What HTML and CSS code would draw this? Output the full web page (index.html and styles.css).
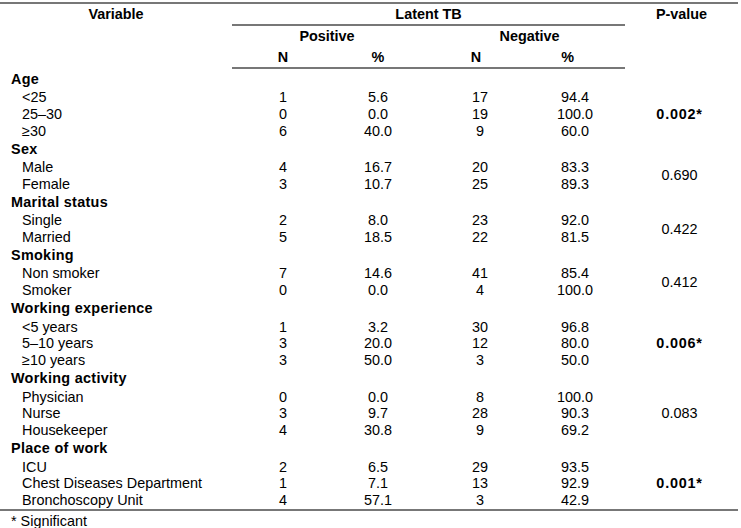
FILE: index.html
```html
<!DOCTYPE html>
<html>
<head>
<meta charset="utf-8">
<link rel="stylesheet" href="styles.css">
</head>
<body>
<table class="tb">
  <colgroup>
    <col class="c-var"><col class="c-n1"><col class="c-p1"><col class="c-n2"><col class="c-p2"><col class="c-pv">
  </colgroup>
  <thead>
    <tr class="h1">
      <th rowspan="3" class="th-var">Variable</th>
      <th colspan="4" class="th-lat">Latent TB</th>
      <th rowspan="3" class="th-pv">P-value</th>
    </tr>
    <tr class="h2">
      <th colspan="2" class="th-pos">Positive</th>
      <th colspan="2" class="th-neg">Negative</th>
    </tr>
    <tr class="h3">
      <th class="th-sub">N</th>
      <th class="th-sub">%</th>
      <th class="th-sub th-n2">N</th>
      <th class="th-sub th-p2">%</th>
    </tr>
  </thead>
  <tbody>
    <tr class="grp"><td class="g">Age</td><td colspan="5"></td></tr>
    <tr class="row"><td class="v">&lt;25</td><td class="n1">1</td><td class="p1">5.6</td><td class="n2">17</td><td class="p2">94.4</td><td rowspan="3" class="pv sig">0.002*</td></tr>
    <tr class="row"><td class="v">25–30</td><td class="n1">0</td><td class="p1">0.0</td><td class="n2">19</td><td class="p2">100.0</td></tr>
    <tr class="row"><td class="v">≥30</td><td class="n1">6</td><td class="p1">40.0</td><td class="n2">9</td><td class="p2">60.0</td></tr>

    <tr class="grp"><td class="g">Sex</td><td colspan="5"></td></tr>
    <tr class="row"><td class="v">Male</td><td class="n1">4</td><td class="p1">16.7</td><td class="n2">20</td><td class="p2">83.3</td><td rowspan="2" class="pv">0.690</td></tr>
    <tr class="row"><td class="v">Female</td><td class="n1">3</td><td class="p1">10.7</td><td class="n2">25</td><td class="p2">89.3</td></tr>

    <tr class="grp"><td class="g">Marital status</td><td colspan="5"></td></tr>
    <tr class="row"><td class="v">Single</td><td class="n1">2</td><td class="p1">8.0</td><td class="n2">23</td><td class="p2">92.0</td><td rowspan="2" class="pv">0.422</td></tr>
    <tr class="row"><td class="v">Married</td><td class="n1">5</td><td class="p1">18.5</td><td class="n2">22</td><td class="p2">81.5</td></tr>

    <tr class="grp"><td class="g">Smoking</td><td colspan="5"></td></tr>
    <tr class="row"><td class="v">Non smoker</td><td class="n1">7</td><td class="p1">14.6</td><td class="n2">41</td><td class="p2">85.4</td><td rowspan="2" class="pv">0.412</td></tr>
    <tr class="row"><td class="v">Smoker</td><td class="n1">0</td><td class="p1">0.0</td><td class="n2">4</td><td class="p2">100.0</td></tr>

    <tr class="grp"><td class="g">Working experience</td><td colspan="5"></td></tr>
    <tr class="row"><td class="v">&lt;5 years</td><td class="n1">1</td><td class="p1">3.2</td><td class="n2">30</td><td class="p2">96.8</td><td rowspan="3" class="pv sig">0.006*</td></tr>
    <tr class="row"><td class="v">5–10 years</td><td class="n1">3</td><td class="p1">20.0</td><td class="n2">12</td><td class="p2">80.0</td></tr>
    <tr class="row"><td class="v">≥10 years</td><td class="n1">3</td><td class="p1">50.0</td><td class="n2">3</td><td class="p2">50.0</td></tr>

    <tr class="grp"><td class="g">Working activity</td><td colspan="5"></td></tr>
    <tr class="row"><td class="v">Physician</td><td class="n1">0</td><td class="p1">0.0</td><td class="n2">8</td><td class="p2">100.0</td><td rowspan="3" class="pv">0.083</td></tr>
    <tr class="row"><td class="v">Nurse</td><td class="n1">3</td><td class="p1">9.7</td><td class="n2">28</td><td class="p2">90.3</td></tr>
    <tr class="row"><td class="v">Housekeeper</td><td class="n1">4</td><td class="p1">30.8</td><td class="n2">9</td><td class="p2">69.2</td></tr>

    <tr class="grp"><td class="g">Place of work</td><td colspan="5"></td></tr>
    <tr class="row"><td class="v">ICU</td><td class="n1">2</td><td class="p1">6.5</td><td class="n2">29</td><td class="p2">93.5</td><td rowspan="3" class="pv sig">0.001*</td></tr>
    <tr class="row"><td class="v">Chest Diseases Department</td><td class="n1">1</td><td class="p1">7.1</td><td class="n2">13</td><td class="p2">92.9</td></tr>
    <tr class="row last"><td class="v">Bronchoscopy Unit</td><td class="n1">4</td><td class="p1">57.1</td><td class="n2">3</td><td class="p2">42.9</td></tr>
  </tbody>
</table>
<p class="note">* Significant</p>
</body>
</html>
```

FILE: styles.css
```css
html, body {
  margin: 0;
  padding: 0;
  background: #ffffff;
}
body {
  padding-top: 2px;
  font-family: "Liberation Sans", Arial, sans-serif;
  font-size: 14.4px;
  color: #000;
}
.tb {
  width: 738px;
  border-collapse: separate;
  border-spacing: 0;
  table-layout: fixed;
  border-top: 2px solid #777;
  border-bottom: 2px solid #777;
}
.c-var { width: 232px; }
.c-n1 { width: 102px; }
.c-p1 { width: 88px; }
.c-n2 { width: 108px; }
.c-p2 { width: 95px; }
.c-pv { width: 113px; }

th, td {
  padding: 0;
  font-weight: normal;
}
th {
  font-weight: bold;
  text-align: center;
  white-space: nowrap;
}
.h1 th { height: 20px; line-height: 20px; vertical-align: top; }
.th-lat { border-bottom: 2px solid #777; }
.h2 th { height: 21px; line-height: 21px; }
.th-neg { padding-left: 12px; }
.h3 th { height: 20px; line-height: 20px; border-bottom: 2px solid #777; }
.th-p2 { padding-right: 20px; }

td {
  line-height: 16px;
  white-space: nowrap;
  text-align: center;
}
.grp td { height: 19.6px; }
.row td { height: 16.8px; }
td.g {
  font-weight: bold;
  text-align: left;
  padding-left: 11px;
  letter-spacing: 0.3px;
}
td.v {
  text-align: left;
  padding-left: 22px;
}
td.n2 { padding-left: 8px; }
td.p2 { padding-right: 5px; }
td.pv { vertical-align: middle; padding-right: 4px; }
td.sig { font-weight: bold; letter-spacing: 0.8px; }
.note {
  margin: 2px 0 0 11px;
  line-height: 16px;
}
```
